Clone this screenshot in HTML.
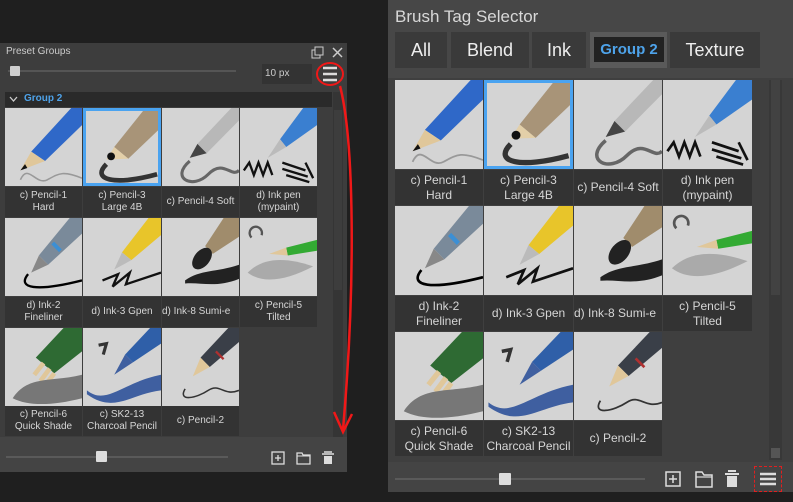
<!DOCTYPE html>
<html><head><meta charset="utf-8"><style>
*{margin:0;padding:0;box-sizing:border-box}
body{width:793px;height:502px;background:#1f1f1f;position:relative;overflow:hidden;font-family:"Liberation Sans",sans-serif;color:#ddd}
.a{position:absolute}
.tile{position:absolute;background:#d4d4d4;overflow:hidden}
.lab{position:absolute;background:#333;color:#d6d6d6;text-align:center;display:flex;align-items:center;justify-content:center;line-height:1.25;white-space:nowrap;overflow:hidden}
.sel{outline:3px solid #4aa3f0;outline-offset:-3px}
</style></head><body>
<svg width="0" height="0" style="position:absolute">
<defs>
<symbol id="pb" viewBox="0 0 100 100"><path d="M100 0 L100 22 L52 68 L34 56 L86 0Z" fill="#2f68c8"/><path d="M52 68 L34 56 L20 80Z" fill="#e0c79a"/><path d="M26 72 L20 80 L29 77Z" fill="#111"/><path d="M20 92 C30 70 40 100 55 92 S75 80 100 90" stroke="#999" stroke-width="2" fill="none"/></symbol>
<symbol id="pt" viewBox="0 0 100 100"><path d="M100 0 L100 25 L58 65 L40 50 L80 0Z" fill="#a89478"/><path d="M58 65 L40 50 L30 66Z" fill="#e3cfa8"/><circle cx="36" cy="62" r="5" fill="#111"/><path d="M30 72 C10 92 40 100 95 85" stroke="#333" stroke-width="6" fill="none"/></symbol>
<symbol id="ps" viewBox="0 0 100 100"><path d="M100 0 L100 16 L58 58 L46 46 L90 0Z" fill="#b8b8b8"/><path d="M58 58 L46 46 L36 64Z" fill="#444"/><path d="M36 68 C10 90 40 105 60 85 S90 90 100 80" stroke="#666" stroke-width="4" fill="none"/></symbol>
<symbol id="pi" viewBox="0 0 100 100"><path d="M100 0 L100 22 L60 50 L52 40 L82 0Z" fill="#3a7fd0"/><path d="M60 50 L52 40 L36 64Z" fill="#bbb"/><path d="M5 80 L12 70 L18 86 L24 70 L30 86 L36 70 L42 86 M55 70 L85 80 M55 78 L88 88 M60 86 L90 95 M85 70 L95 90" stroke="#111" stroke-width="3" fill="none"/></symbol>
<symbol id="pk" viewBox="0 0 100 100"><path d="M100 0 L100 20 L56 60 L44 48 L84 0Z" fill="#7a8a9a"/><path d="M62 32 L72 42" stroke="#3c8fd4" stroke-width="5"/><path d="M56 60 L44 48 L34 70Z" fill="#888"/><path d="M30 72 C15 90 40 95 100 80" stroke="#000" stroke-width="3" fill="none"/></symbol>
<symbol id="py" viewBox="0 0 100 100"><path d="M100 0 L100 22 L62 54 L50 44 L84 0Z" fill="#e8c52a"/><path d="M62 54 L50 44 L40 66Z" fill="#bbb"/><path d="M25 80 L45 72 L38 88 L60 70 L55 85 L100 70" stroke="#111" stroke-width="3" fill="none"/></symbol>
<symbol id="pm" viewBox="0 0 100 100"><path d="M100 0 L100 24 L66 46 L56 36 L80 0Z" fill="#a08c6c"/><ellipse cx="52" cy="52" rx="10" ry="16" transform="rotate(40 52 52)" fill="#222"/><path d="M30 80 C50 66 70 70 100 60 L100 78 C70 90 50 82 30 84Z" fill="#222"/></symbol>
<symbol id="pw" viewBox="0 0 100 100"><path d="M100 28 L100 42 L62 48 L60 38Z" fill="#3a3"/><path d="M60 38 L62 48 L38 46Z" fill="#e0c79a"/><path d="M10 70 C30 50 60 50 95 62 C60 80 30 85 10 70Z" fill="#aaa"/><path d="M15 25 A8 8 0 1 1 28 22" stroke="#555" stroke-width="3" fill="none"/></symbol>
<symbol id="pg" viewBox="0 0 100 100"><path d="M100 0 L100 30 L64 58 L40 38 L76 0Z" fill="#2e6a33"/><path d="M50 45 L38 60 M58 52 L46 68 M64 58 L52 74" stroke="#e0c79a" stroke-width="6"/><path d="M10 90 C30 60 60 70 100 60 L100 90 C60 100 30 100 10 90Z" fill="#777"/></symbol>
<symbol id="pc" viewBox="0 0 100 100"><path d="M100 0 L100 20 L64 44 L54 34 L86 0Z" fill="#2f5fa8"/><path d="M64 44 L54 34 L40 60Z" fill="#4060a0"/><path d="M5 80 C30 100 50 70 100 60 L100 80 C60 85 40 110 5 85Z" fill="#3f5fa0"/><path d="M20 22 L30 20 L26 34" stroke="#333" stroke-width="4" fill="none"/></symbol>
<symbol id="pd" viewBox="0 0 100 100"><path d="M100 0 L100 18 L62 50 L50 38 L86 0Z" fill="#3a3f48"/><path d="M70 30 L80 40" stroke="#b03030" stroke-width="3"/><path d="M62 50 L50 38 L40 62Z" fill="#e0c79a"/><path d="M30 78 C20 95 45 90 60 80 S80 88 100 80" stroke="#333" stroke-width="2" fill="none"/></symbol>
</defs></svg>

<!-- LEFT PANEL -->
<div class="a" style="left:0;top:43;left:0;top:43px;width:347px;height:429px;background:#3d3d3d"></div>
<div class="a" style="left:6px;top:46px;font-size:10px;color:#ccc">Preset Groups</div>
<svg class="a" style="left:311px;top:46px" width="34" height="14"><rect x="1" y="4" width="8" height="8" fill="none" stroke="#ccc"/><rect x="4" y="1" width="8" height="8" fill="#3d3d3d" stroke="#ccc"/><path d="M22 2 L31 11 M31 2 L22 11" stroke="#ccc" stroke-width="1.5"/></svg>
<div class="a" style="left:8px;top:70px;width:228px;height:2px;background:#555"></div>
<div class="a" style="left:10px;top:66px;width:10px;height:10px;background:#cfcfcf;border-radius:1px"></div>
<div class="a" style="left:262px;top:64px;width:50px;height:20px;background:#333;font-size:10px;color:#ccc;padding:4px 3px">10 px</div>
<svg class="a" style="left:314px;top:60px" width="32" height="28"><path d="M9 8 H23 M9 14 H23 M9 20 H23" stroke="#ddd" stroke-width="2.5"/><ellipse cx="16" cy="14" rx="13" ry="11" fill="none" stroke="#f01818" stroke-width="2"/></svg>
<div class="a" style="left:5px;top:92px;width:327px;height:15px;background:#2a2a2a;font-size:10px;font-weight:bold;color:#4ea3ea;padding:1px 0 0 19px">Group 2</div>
<svg class="a" style="left:9px;top:96px" width="9" height="7"><path d="M1 1 L4.5 5 L8 1" stroke="#ccc" stroke-width="1.3" fill="none"/></svg>
<div class="a" style="left:333px;top:92px;width:10px;height:346px;background:#353535"></div>
<div class="a" style="left:334px;top:110px;width:8px;height:180px;background:#3d3d3d"></div>
<div class="a" style="left:332px;top:437px;width:347px;height:35px;left:0;background:#444"></div>
<div class="a" style="left:6px;top:456px;width:222px;height:2px;background:#5a5a5a"></div>
<div class="a" style="left:96px;top:451px;width:11px;height:11px;background:#ddd;border-radius:1px"></div>
<svg class="a" style="left:270px;top:450px" width="72" height="16"><rect x="2" y="2" width="12" height="12" fill="none" stroke="#ddd" stroke-width="1.3"/><path d="M8 5 V11 M5 8 H11" stroke="#ddd" stroke-width="1.3"/><path d="M27 3 H32 L33 5 H40 V14 H27Z" fill="none" stroke="#ddd" stroke-width="1.3"/><path d="M27 6 H40" stroke="#ddd"/><path d="M54 2 H62 M52 4 H64" stroke="#ddd" stroke-width="1.5"/><path d="M54 6 H62 V14 H54Z" fill="#ddd"/></svg>

<!-- left tiles -->
<div class="tile" style="left:5px;top:108px;width:77px;height:78px"><svg width="77" height="78" viewBox="0 0 100 100" preserveAspectRatio="none"><use href="#pb"/></svg></div>
<div class="tile sel" style="left:83px;top:108px;width:78px;height:78px"><svg width="78" height="78" viewBox="0 0 100 100" preserveAspectRatio="none"><use href="#pt"/></svg></div>
<div class="tile" style="left:162px;top:108px;width:77px;height:78px"><svg width="77" height="78" viewBox="0 0 100 100" preserveAspectRatio="none"><use href="#ps"/></svg></div>
<div class="tile" style="left:240px;top:108px;width:77px;height:78px"><svg width="77" height="78" viewBox="0 0 100 100" preserveAspectRatio="none"><use href="#pi"/></svg></div>
<div class="lab" style="left:5px;top:187px;width:77px;height:30px;font-size:10px">c) Pencil-1<br>Hard</div>
<div class="lab" style="left:83px;top:187px;width:78px;height:30px;font-size:10px">c) Pencil-3<br>Large 4B</div>
<div class="lab" style="left:162px;top:187px;width:77px;height:30px;font-size:10px">c) Pencil-4 Soft</div>
<div class="lab" style="left:240px;top:187px;width:77px;height:30px;font-size:10px">d) Ink pen<br>(mypaint)</div>
<div class="tile" style="left:5px;top:218px;width:77px;height:78px"><svg width="77" height="78" viewBox="0 0 100 100" preserveAspectRatio="none"><use href="#pk"/></svg></div>
<div class="tile" style="left:83px;top:218px;width:78px;height:78px"><svg width="78" height="78" viewBox="0 0 100 100" preserveAspectRatio="none"><use href="#py"/></svg></div>
<div class="tile" style="left:162px;top:218px;width:77px;height:78px"><svg width="77" height="78" viewBox="0 0 100 100" preserveAspectRatio="none"><use href="#pm"/></svg></div>
<div class="tile" style="left:240px;top:218px;width:77px;height:78px"><svg width="77" height="78" viewBox="0 0 100 100" preserveAspectRatio="none"><use href="#pw"/></svg></div>
<div class="lab" style="left:5px;top:297px;width:77px;height:30px;font-size:10px">d) Ink-2<br>Fineliner</div>
<div class="lab" style="left:83px;top:297px;width:78px;height:30px;font-size:10px">d) Ink-3 Gpen</div>
<div class="lab" style="left:162px;top:297px;width:77px;height:30px;font-size:10px;justify-content:flex-start">d) Ink-8 Sumi-e</div>
<div class="lab" style="left:240px;top:297px;width:77px;height:30px;font-size:10px">c) Pencil-5<br>Tilted</div>
<div class="tile" style="left:5px;top:328px;width:77px;height:78px"><svg width="77" height="78" viewBox="0 0 100 100" preserveAspectRatio="none"><use href="#pg"/></svg></div>
<div class="tile" style="left:83px;top:328px;width:78px;height:78px"><svg width="78" height="78" viewBox="0 0 100 100" preserveAspectRatio="none"><use href="#pc"/></svg></div>
<div class="tile" style="left:162px;top:328px;width:77px;height:78px"><svg width="77" height="78" viewBox="0 0 100 100" preserveAspectRatio="none"><use href="#pd"/></svg></div>
<div class="lab" style="left:5px;top:406px;width:77px;height:30px;font-size:10px">c) Pencil-6<br>Quick Shade</div>
<div class="lab" style="left:83px;top:406px;width:78px;height:30px;font-size:10px">c) SK2-13<br>Charcoal Pencil</div>
<div class="lab" style="left:162px;top:406px;width:77px;height:30px;font-size:10px">c) Pencil-2</div>

<!-- red arrow -->
<svg class="a" style="left:330px;top:80px" width="30" height="365"><path d="M10 6 C24 60 26 200 13 350" stroke="#f01818" stroke-width="2.5" fill="none"/><path d="M4 332 L13 352 L22 334" stroke="#f01818" stroke-width="2.5" fill="none"/></svg>

<!-- RIGHT PANEL -->
<div class="a" style="left:388px;top:0;width:405px;height:492px;background:#3f3f3f"></div>
<div class="a" style="left:388px;top:0;width:405px;height:78px;background:#474747"></div>
<div class="a" style="left:395px;top:7px;font-size:17px;color:#d8d8d8">Brush Tag Selector</div>
<div class="a" style="left:395px;top:32px;width:52px;height:36px;background:#3a3a3a;font-size:18px;color:#eee;text-align:center;line-height:36px">All</div>
<div class="a" style="left:451px;top:32px;width:78px;height:36px;background:#3a3a3a;font-size:18px;color:#eee;text-align:center;line-height:36px">Blend</div>
<div class="a" style="left:532px;top:32px;width:54px;height:36px;background:#3a3a3a;font-size:18px;color:#eee;text-align:center;line-height:36px">Ink</div>
<div class="a" style="left:590px;top:32px;width:77px;height:36px;background:#5a5a5a"></div>
<div class="a" style="left:594px;top:37px;width:70px;height:25px;background:#222;font-size:15px;font-weight:bold;color:#4ea3ea;text-align:center;line-height:25px">Group 2</div>
<div class="a" style="left:670px;top:32px;width:90px;height:36px;background:#3a3a3a;font-size:18px;color:#eee;text-align:center;line-height:36px">Texture</div>
<div class="a" style="left:769px;top:80px;width:13px;height:380px;background:#383838"></div>
<div class="a" style="left:771px;top:80px;width:9px;height:215px;background:#424242"></div>
<div class="a" style="left:771px;top:448px;width:9px;height:10px;background:#555"></div>

<div class="tile" style="left:395px;top:80px;width:88px;height:89px"><svg width="88" height="89" viewBox="0 0 100 100" preserveAspectRatio="none"><use href="#pb"/></svg></div>
<div class="tile sel" style="left:484px;top:80px;width:89px;height:89px"><svg width="89" height="89" viewBox="0 0 100 100" preserveAspectRatio="none"><use href="#pt"/></svg></div>
<div class="tile" style="left:574px;top:80px;width:88px;height:89px"><svg width="88" height="89" viewBox="0 0 100 100" preserveAspectRatio="none"><use href="#ps"/></svg></div>
<div class="tile" style="left:663px;top:80px;width:89px;height:89px"><svg width="89" height="89" viewBox="0 0 100 100" preserveAspectRatio="none"><use href="#pi"/></svg></div>
<div class="lab" style="left:395px;top:170px;width:88px;height:35px;font-size:12px">c) Pencil-1<br>Hard</div>
<div class="lab" style="left:484px;top:170px;width:89px;height:35px;font-size:12px">c) Pencil-3<br>Large 4B</div>
<div class="lab" style="left:574px;top:170px;width:88px;height:35px;font-size:12px">c) Pencil-4 Soft</div>
<div class="lab" style="left:663px;top:170px;width:89px;height:35px;font-size:12px">d) Ink pen<br>(mypaint)</div>
<div class="tile" style="left:395px;top:206px;width:88px;height:89px"><svg width="88" height="89" viewBox="0 0 100 100" preserveAspectRatio="none"><use href="#pk"/></svg></div>
<div class="tile" style="left:484px;top:206px;width:89px;height:89px"><svg width="89" height="89" viewBox="0 0 100 100" preserveAspectRatio="none"><use href="#py"/></svg></div>
<div class="tile" style="left:574px;top:206px;width:88px;height:89px"><svg width="88" height="89" viewBox="0 0 100 100" preserveAspectRatio="none"><use href="#pm"/></svg></div>
<div class="tile" style="left:663px;top:206px;width:89px;height:89px"><svg width="89" height="89" viewBox="0 0 100 100" preserveAspectRatio="none"><use href="#pw"/></svg></div>
<div class="lab" style="left:395px;top:296px;width:88px;height:35px;font-size:12px">d) Ink-2<br>Fineliner</div>
<div class="lab" style="left:484px;top:296px;width:89px;height:35px;font-size:12px">d) Ink-3 Gpen</div>
<div class="lab" style="left:574px;top:296px;width:88px;height:35px;font-size:12px;justify-content:flex-start">d) Ink-8 Sumi-e</div>
<div class="lab" style="left:663px;top:296px;width:89px;height:35px;font-size:12px">c) Pencil-5<br>Tilted</div>
<div class="tile" style="left:395px;top:332px;width:88px;height:88px"><svg width="88" height="88" viewBox="0 0 100 100" preserveAspectRatio="none"><use href="#pg"/></svg></div>
<div class="tile" style="left:484px;top:332px;width:89px;height:88px"><svg width="89" height="88" viewBox="0 0 100 100" preserveAspectRatio="none"><use href="#pc"/></svg></div>
<div class="tile" style="left:574px;top:332px;width:88px;height:88px"><svg width="88" height="88" viewBox="0 0 100 100" preserveAspectRatio="none"><use href="#pd"/></svg></div>
<div class="lab" style="left:395px;top:421px;width:88px;height:35px;font-size:12px">c) Pencil-6<br>Quick Shade</div>
<div class="lab" style="left:484px;top:421px;width:89px;height:35px;font-size:12px">c) SK2-13<br>Charcoal Pencil</div>
<div class="lab" style="left:574px;top:421px;width:88px;height:35px;font-size:12px">c) Pencil-2</div>

<div class="a" style="left:388px;top:462px;width:405px;height:30px;background:#444"></div>
<div class="a" style="left:395px;top:478px;width:250px;height:2px;background:#5a5a5a"></div>
<div class="a" style="left:499px;top:473px;width:12px;height:12px;background:#ddd;border-radius:1px"></div>
<svg class="a" style="left:664px;top:469px" width="80" height="20"><rect x="2" y="3" width="14" height="14" fill="none" stroke="#ddd" stroke-width="1.5"/><path d="M9 6 V14 M5 10 H13" stroke="#ddd" stroke-width="1.5"/><path d="M32 3 H38 L40 6 H48 V18 H32Z" fill="none" stroke="#ddd" stroke-width="1.5"/><path d="M32 8 H48" stroke="#ddd" stroke-width="1.2"/><path d="M64 2 H72 M61 5 H75" stroke="#ddd" stroke-width="2"/><path d="M63 7 H73 V18 H63Z" fill="#ddd"/></svg>
<div class="a" style="left:754px;top:466px;width:28px;height:26px;border:1.5px dashed #e02020"></div>
<svg class="a" style="left:754px;top:466px" width="28" height="26"><path d="M6 8 H22 M6 13 H22 M6 18 H22" stroke="#ddd" stroke-width="2.5"/></svg>
</body></html>
